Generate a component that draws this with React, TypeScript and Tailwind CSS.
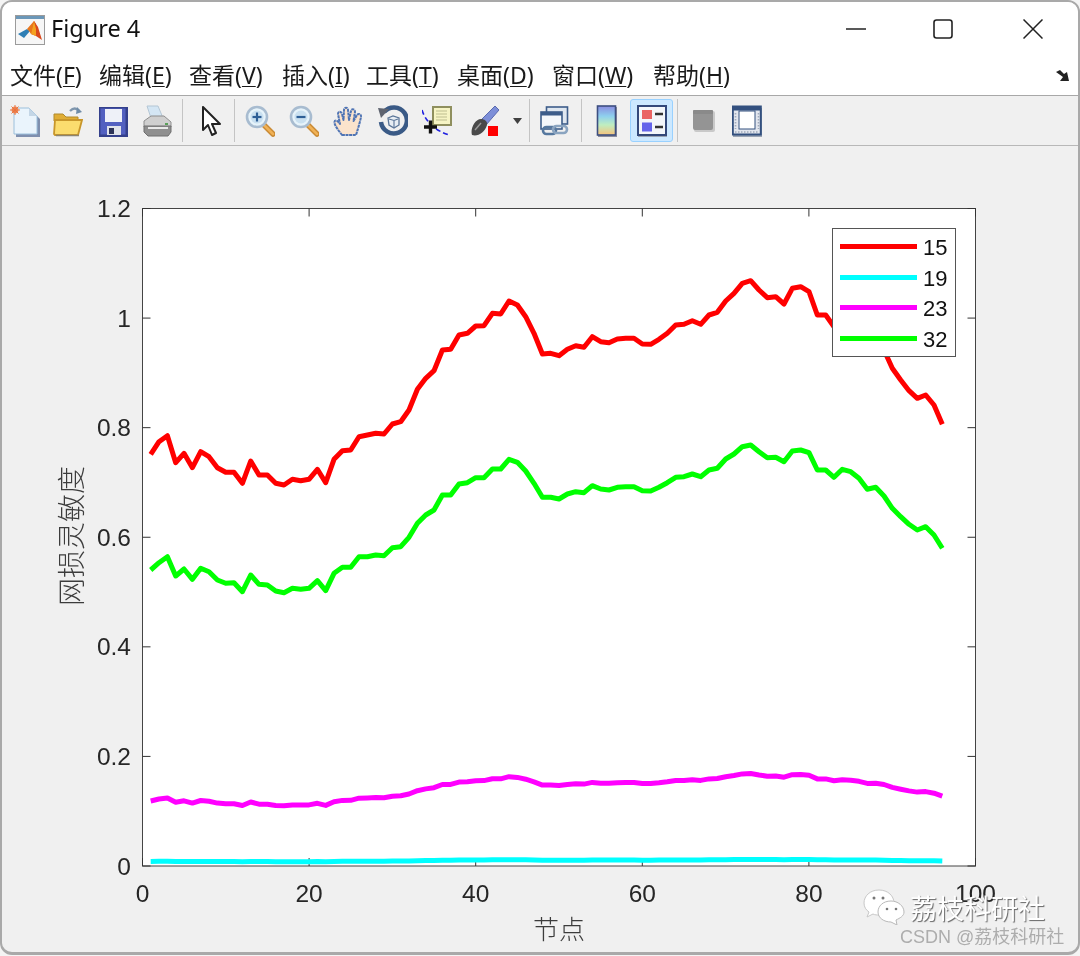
import React from "react";

// traced from the reference, i = 1..96. first 48 points are offset 280, the rest 270 (third-pixels)
const redA = [523,485,467,548,520,563,515,530,563,577,577,610,543,585,585,610,615,598,602,598,568,608,538,512,510,470,465,460,462,432,425,390,328,295,272,210,208,165,160,138,137,100,102,63,75,110,160,222];
const redB = [250,257,238,227,232,200,215,218,207,205,205,222,223,208,190,165,163,152,163,135,127,93,70,40,32,60,83,80,102,55,50,65,135,135,170,150,158,180,220,215,240,295,330,362,385,375,405,463];
const greenA = [870,848,830,888,867,898,865,875,900,910,908,935,885,913,915,933,938,925,928,925,902,932,880,862,862,830,830,825,827,803,800,772,730,705,690,645,645,612,608,593,593,567,567,538,547,573,610,652];
const greenB = [682,687,672,665,668,647,657,660,652,650,650,662,663,652,638,622,620,612,620,600,595,567,552,530,525,545,563,562,575,543,540,548,600,600,622,598,605,625,658,652,678,715,740,763,780,770,795,835];

const red = [...redA.map((z) => 280 + z / 3), ...redB.map((z) => 270 + z / 3)];
const green = [...greenA.map((z) => 280 + z / 3), ...greenB.map((z) => 270 + z / 3)];
const BASE = 866;
const magenta = red.map((y) => BASE - (BASE - y) * 0.158);
const cyan = red.map((y) => BASE - (BASE - y) * 0.0112);

const toPoints = (ys: number[]) =>
  ys.map((y, i) => `${(150.7 + i * 8.333).toFixed(1)},${y.toFixed(1)}`).join(" ");

const xTicks = [0, 20, 40, 60, 80, 100];
const yTicks = ["0", "0.2", "0.4", "0.6", "0.8", "1", "1.2"];
const LEFT = 142.5;
const RIGHT = 975.5;
const TOP = 208.5;
const BOTTOM = 866;

const sep = "w-px h-[43px] bg-[#c4c4c4] shrink-0";
const icon = "w-[30px] h-[32px] shrink-0 blur-[0.3px]";

function MatlabLogo() {
  return (
    <svg viewBox="0 0 30 30" className="w-[30px] h-[30px] ml-[13px] mt-[2px] shrink-0">
      <rect x="0.5" y="0.5" width="29" height="29" fill="#f6f6f6" stroke="#9b9b9b" />
      <rect x="1" y="1" width="28" height="3" fill="#6b97b8" />
      <path d="M3 19 L12 14 L15 16 L9 23Z" fill="#2f7fb5" />
      <path d="M12 14 L19 6 L21 9 L16 19 L14 16Z" fill="#e8761c" />
      <path d="M19 6 L23 12 L27 25 L21 21 L16 19Z" fill="#d9481c" />
      <path d="M19 6 L21 14 L21 21 L16 19Z" fill="#f4a11f" />
    </svg>
  );
}

function NewIcon() {
  return (
    <svg viewBox="0 0 30 32" className={`${icon} ml-[8px]`}>
      <path d="M6 5 H21 L30 14 V32 H6Z" fill="#7f8fae" />
      <path d="M4 3 H19 L27 11 V29 H4Z" fill="#eaf4fc" stroke="#9cc0dc" />
      <path d="M19 3 V11 H27Z" fill="#c4d6e6" />
      <circle cx="5" cy="5" r="3.4" fill="#f08a5a" />
      <path d="M5 0 V10 M0 5 H10 M1.5 1.5 L8.5 8.5 M8.5 1.5 L1.5 8.5" stroke="#e8733e" strokeWidth="1" />
    </svg>
  );
}

function OpenIcon() {
  return (
    <svg viewBox="0 0 30 32" className={`${icon} ml-[13px]`}>
      <path d="M17 6 Q22 1 26 6" fill="none" stroke="#8097ae" strokeWidth="2.4" />
      <path d="M24 2 L29 7 L23 9Z" fill="#6f8ca8" />
      <path d="M1 9 H10 L13 12 H25 V16 H1Z" fill="#e0ad35" stroke="#b08a2c" />
      <path d="M1 29 L2 15 H29 L25 30 H2Z" fill="#fbdc6e" stroke="#c8962a" strokeWidth="1.8" />
      <path d="M3 30.500 H26" stroke="#8c8470" strokeWidth="1.500" />
    </svg>
  );
}

function SaveIcon() {
  return (
    <svg viewBox="0 0 30 32" className={`${icon} ml-[15px]`}>
      <rect x="1" y="2" width="29" height="30" fill="#34408c" />
      <rect x="2.500" y="3.500" width="25" height="26" fill="#5260c0" />
      <rect x="7" y="4" width="17" height="13" fill="#eef1f8" />
      <rect x="9" y="21" width="14" height="9" fill="#dfe2ea" />
      <rect x="11" y="23" width="5" height="6" fill="#2c3358" />
    </svg>
  );
}

function PrintIcon() {
  return (
    <svg viewBox="0 0 30 32" className={`${icon} ml-[14px]`}>
      <path d="M5 1 H16 L21 13 H9Z" fill="#d4e6f4" stroke="#b4c6d4" />
      <path d="M2 16 L9 11 H22 L29 17 V22 H2Z" fill="#cfcfcf" stroke="#8e8e8e" />
      <path d="M2 21 H29 V27 L26 31 H6 L2 27Z" fill="#8f8f8f" stroke="#6f6f6f" />
      <rect x="6" y="22" width="20" height="2" fill="#e9e9e9" />
      <rect x="23" y="18" width="3" height="2" fill="#5aa05a" />
    </svg>
  );
}

function ArrowIcon() {
  return (
    <svg viewBox="0 0 30 32" className={`${icon} ml-[13px]`}>
      <path d="M7 2 V25 L12 20 L16 30 L20 28 L16 19 L24 19Z" fill="#fff" stroke="#222" strokeWidth="2" strokeLinejoin="round" />
    </svg>
  );
}

function ZoomIcon({ plus, className }: { plus?: boolean; className: string }) {
  return (
    <svg viewBox="0 0 30 32" className={`${icon} ${className}`}>
      <path d="M19 20 L28 29" stroke="#c98a34" strokeWidth="5.500" strokeLinecap="round" />
      <path d="M19 20 L28 29" stroke="#f0b156" strokeWidth="2.500" strokeLinecap="round" />
      <circle cx="12" cy="12" r="10" fill="#e6f3fa" stroke="#a8bcd0" strokeWidth="2.600" />
      <circle cx="12" cy="12" r="6.500" fill="#c9e0f0" />
      <path d="M7.500 12 H16.500" stroke="#2d5f96" strokeWidth="2.200" />
      {plus && <path d="M12 7.500 V16.500" stroke="#2d5f96" strokeWidth="2.200" />}
    </svg>
  );
}

function HandIcon() {
  return (
    <svg viewBox="0 0 30 32" className={`${icon} ml-[14px]`}>
      <path
        d="M9 30 C6 26 1 20 1.500 17 C2 14 5 16 7 19 L5 9 C5 6 8 6 9 9 L10.500 15 L11 5 C11 2 15 2 15 5 L16 15 L18 6 C18.500 3 22 4 22 7 L20.500 16 L24 10 C25.500 8 28.500 9 28 12 C27 17 25 24 23 30Z"
        fill="#fbe3cc"
        stroke="#4f74b4"
        strokeWidth="2"
        strokeLinejoin="round"
        strokeDasharray="3 0.6"
      />
    </svg>
  );
}

function RotateIcon() {
  return (
    <svg viewBox="0 0 30 32" className={`${icon} ml-[15px]`}>
      <path d="M6 7 A13 13 0 1 1 3 17" fill="none" stroke="#3a5a86" strokeWidth="4.500" />
      <path d="M0 3 L11 4 L3 13Z" fill="#5f6470" />
      <path d="M10 13 L15 11 L21 13 V20 L16 23 L11 20Z" fill="#e8eef4" stroke="#5a7598" strokeWidth="1.300" />
      <path d="M11 14 L16 15.500 L20 14 M16 15.500 V22" fill="none" stroke="#5a7598" strokeWidth="1.100" />
    </svg>
  );
}

function DatatipIcon() {
  return (
    <svg viewBox="0 0 30 32" className={`${icon} ml-[14px]`}>
      <path d="M0 5 C3 15 12 26 28 30" fill="none" stroke="#1f1fe0" strokeWidth="1.600" strokeDasharray="5 3" />
      <rect x="10" y="1" width="20" height="20" fill="#8f8f5e" />
      <rect x="12" y="3" width="16" height="16" fill="#f6f4c4" />
      <path d="M14 6 H25 M14 9 H25 M14 12 H25 M14 15 H25" stroke="#bdbd8f" strokeWidth="1.200" />
      <path d="M2 22 H15 M8.500 15.500 V28.500" stroke="#111" strokeWidth="3.400" />
    </svg>
  );
}

function BrushIcon() {
  return (
    <svg viewBox="0 0 30 32" className={`${icon} ml-[17px]`}>
      <path d="M12 15 L26 1 L30 5 L17 20Z" fill="#7d8fd8" stroke="#5a6ab0" />
      <path d="M3 30 C1 24 6 14 12 14 C16 14 19 17 18 20 C16 27 9 32 3 30Z" fill="#4a4a4a" />
      <path d="M6 25 L12 18" stroke="#9a9a9a" strokeWidth="1.400" />
      <rect x="19" y="21" width="10" height="10" fill="#ff0000" />
    </svg>
  );
}

function LinkIcon() {
  return (
    <svg viewBox="0 0 30 32" className={`${icon} ml-[10px]`}>
      <rect x="6.500" y="2" width="21" height="17" fill="#dfe7f0" stroke="#3d5d8a" strokeWidth="1.600" />
      <rect x="1" y="7" width="21" height="17" fill="#f4f7fa" stroke="#3d5d8a" strokeWidth="1.600" />
      <rect x="1" y="7" width="21" height="3.500" fill="#3d5d8a" />
      <rect x="3" y="22" width="13" height="7" rx="3.500" fill="none" stroke="#56789f" strokeWidth="2.600" />
      <rect x="13" y="21" width="14" height="7" rx="3.500" fill="none" stroke="#8aa4c0" strokeWidth="2.600" />
    </svg>
  );
}

function ColorbarIcon() {
  return (
    <svg viewBox="0 0 30 32" className={`${icon} ml-[10px]`}>
      <defs>
        <linearGradient id="cb" x1="0" y1="0" x2="0" y2="1">
          <stop offset="0" stopColor="#8a8ce0" />
          <stop offset="0.35" stopColor="#8ed0ee" />
          <stop offset="0.65" stopColor="#bfeec0" />
          <stop offset="1" stopColor="#f6c27c" />
        </linearGradient>
      </defs>
      <rect x="6" y="2" width="19" height="30" fill="#8d8d9c" />
      <rect x="5.500" y="1" width="18" height="29" fill="url(#cb)" stroke="#3d4f80" strokeWidth="1.600" />
    </svg>
  );
}

function LegendIcon() {
  return (
    <svg viewBox="0 0 30 32" className="w-[30px] h-[32px] blur-[0.3px]">
      <rect x="1" y="2" width="29" height="30" fill="#9aa4b4" />
      <rect x="1" y="1" width="28" height="29" fill="#f3f6fa" stroke="#33487a" strokeWidth="2" />
      <rect x="5" y="5" width="10" height="9" fill="#ea6464" />
      <rect x="5" y="17.500" width="10" height="9" fill="#6464ea" />
      <path d="M18 9 H26 M18 22 H26" stroke="#333" strokeWidth="2.400" />
    </svg>
  );
}

function GrayIcon() {
  return (
    <svg viewBox="0 0 30 32" className={`${icon} ml-[11px]`}>
      <rect x="5" y="6" width="21" height="21" rx="2" fill="#c9c9c9" />
      <rect x="4" y="5" width="20" height="20" rx="2" fill="#949494" />
      <rect x="4" y="5" width="20" height="4" rx="1" fill="#8a8a8a" />
    </svg>
  );
}

function FrameIcon() {
  return (
    <svg viewBox="0 0 30 32" className={`${icon} ml-[13px]`}>
      <rect x="1" y="3" width="29" height="29" fill="#9aa4b4" />
      <rect x="0.800" y="1.500" width="28" height="28" fill="#e2e6ee" stroke="#33507f" strokeWidth="2" />
      <rect x="1" y="2" width="28" height="3.500" fill="#33507f" />
      <rect x="7" y="6" width="16" height="18" fill="#fff" stroke="#33507f" />
      <path d="M3.500 8 V24 M26.500 8 V24 M3 27 H27" stroke="#9fa9ba" strokeWidth="1.600" strokeDasharray="1.500 1.500" />
    </svg>
  );
}

function Toolbar() {
  return (
    <div className="flex items-center h-[49px] bg-[#f0f0f0] border-t border-[#a8a8a8] box-content">
      <NewIcon />
      <OpenIcon />
      <SaveIcon />
      <PrintIcon />
      <div className={`${sep} ml-[10px]`} />
      <ArrowIcon />
      <div className={`${sep} ml-[8px]`} />
      <ZoomIcon plus className="ml-[10px]" />
      <ZoomIcon className="ml-[14px]" />
      <HandIcon />
      <RotateIcon />
      <DatatipIcon />
      <BrushIcon />
      <svg viewBox="0 0 9 6" className="w-[9px] h-[6px] ml-[14px] shrink-0">
        <path d="M0 0 H9 L4.500 6Z" fill="#404040" />
      </svg>
      <div className={`${sep} ml-[7px]`} />
      <LinkIcon />
      <div className={`${sep} ml-[11px]`} />
      <ColorbarIcon />
      <div className="w-[43px] h-[43px] ml-[8px] shrink-0 flex items-center justify-center bg-[#cce8ff] border border-[#99d1ff] rounded-[3px]">
        <LegendIcon />
      </div>
      <div className={`${sep} ml-[4px]`} />
      <GrayIcon />
      <FrameIcon />
    </div>
  );
}

const menus = [
  { name: "文件", key: "F", width: "w-[89px]" },
  { name: "编辑", key: "E", width: "w-[90px]" },
  { name: "查看", key: "V", width: "w-[93px]" },
  { name: "插入", key: "I", width: "w-[84px]" },
  { name: "工具", key: "T", width: "w-[91px]" },
  { name: "桌面", key: "D", width: "w-[95px]" },
  { name: "窗口", key: "W", width: "w-[101px]" },
  { name: "帮助", key: "H", width: "w-[80px]" },
];

function MenuBar() {
  return (
    <div className="flex items-center h-[40px] pl-[8px] pr-[8px] bg-white text-[23px] text-[#1a1a1a] font-['Noto_Sans','Noto_Sans_CJK_SC',sans-serif]">
      {menus.map((m) => (
        <span key={m.key} className={`${m.width} whitespace-nowrap`}>
          {m.name}(<span className="underline underline-offset-2 decoration-1">{m.key}</span>)
        </span>
      ))}
      <svg viewBox="0 0 14 12" className="w-[14px] h-[12px] ml-auto mt-[2px]">
        <path d="M0 2 L4 0 L8 4 L11 2 L13 11 L4 11 L7 7Z" fill="#222" />
      </svg>
    </div>
  );
}

function TitleBar() {
  return (
    <div className="flex items-center h-[53px] bg-white font-['Noto_Sans','Open_Sans',sans-serif] text-[23.5px] text-[#111]">
      <MatlabLogo />
      <span className="ml-[6px]">Figure 4</span>
      <div className="ml-auto flex items-center mr-[35px]">
        <svg viewBox="0 0 20 20" className="w-[20px] h-[20px]">
          <path d="M0 10 H20" stroke="#222" strokeWidth="1.500" />
        </svg>
        <svg viewBox="0 0 20 20" className="w-[20px] h-[20px] ml-[67px]">
          <rect x="1" y="1" width="18" height="18" rx="2.500" fill="none" stroke="#222" strokeWidth="1.600" />
        </svg>
        <svg viewBox="0 0 20 20" className="w-[20px] h-[20px] ml-[70px]">
          <path d="M0.500 0.500 L19.500 19.500 M19.500 0.500 L0.500 19.500" stroke="#222" strokeWidth="1.500" />
        </svg>
      </div>
    </div>
  );
}

function Chart() {
  const tickColor = "#333";
  return (
    <svg viewBox="2 146 1076 806" className="block w-[1076px] h-[806px]" fontFamily="'Liberation Sans', Arial, sans-serif">
      <rect x={LEFT} y={TOP} width={RIGHT - LEFT} height={BOTTOM - TOP} fill="#fff" stroke="#444" strokeWidth="1" />
      {xTicks.map((t) => {
        const x = LEFT + (t / 100) * (RIGHT - LEFT);
        return (
          <g key={t}>
            <path d={`M${x} ${BOTTOM} v-8 M${x} ${TOP} v8`} stroke={tickColor} strokeWidth="1" />
            <text x={x} y={893} fontSize="24.500" fill="#262626" textAnchor="middle" dominantBaseline="central">
              {t}
            </text>
          </g>
        );
      })}
      {yTicks.map((t) => {
        const y = BOTTOM - (Number(t) / 1.2) * (BOTTOM - TOP);
        return (
          <g key={t}>
            <path d={`M${LEFT} ${y} h8 M${RIGHT} ${y} h-8`} stroke={tickColor} strokeWidth="1" />
            <text x={131} y={y} fontSize="24.500" fill="#262626" textAnchor="end" dominantBaseline="central">
              {t}
            </text>
          </g>
        );
      })}
      <polyline points={toPoints(red)} fill="none" stroke="#ff0000" strokeWidth="5" strokeLinejoin="round" />
      <polyline points={toPoints(cyan)} fill="none" stroke="#00ffff" strokeWidth="5" />
      <polyline points={toPoints(magenta)} fill="none" stroke="#ff00ff" strokeWidth="5" strokeLinejoin="round" />
      <polyline points={toPoints(green)} fill="none" stroke="#00ff00" strokeWidth="5" strokeLinejoin="round" />
      <text
        x={559}
        y={927}
        fontSize="26"
        fill="#3c3c3c"
        textAnchor="middle"
        dominantBaseline="central"
        fontFamily="'Noto Sans CJK SC', sans-serif"
        fontWeight="300"
      >
        节点
      </text>
      <text
        transform="translate(70 536) rotate(-90)"
        fontSize="28"
        fill="#3c3c3c"
        textAnchor="middle"
        dominantBaseline="central"
        fontFamily="'Noto Sans CJK SC', sans-serif"
        fontWeight="300"
      >
        网损灵敏度
      </text>
    </svg>
  );
}

const legendRows = [
  { label: "15", line: "bg-[#ff0000]" },
  { label: "19", line: "bg-[#00ffff]" },
  { label: "23", line: "bg-[#ff00ff]" },
  { label: "32", line: "bg-[#00ff00]" },
];

function Legend() {
  return (
    <div className="absolute left-[830px] top-[82px] w-[124px] h-[129px] bg-white border border-[#555] flex flex-col justify-center gap-[7px] pl-[7px] font-['Liberation_Sans',sans-serif] text-[22px] leading-[20.500px] text-[#111]">
      {legendRows.map((r) => (
        <div key={r.label} className="flex items-center">
          <div className={`w-[77px] h-[5px] ${r.line}`} />
          <span className="ml-[6px] mt-[3px]">{r.label}</span>
        </div>
      ))}
    </div>
  );
}

function Watermark() {
  return (
    <>
      <svg viewBox="0 0 42 36" className="absolute left-[861px] top-[743px] w-[42px] h-[36px]">
        <path d="M16 1 C7 1 1 7 1 14 C1 18 3 21 6 23 L4 28 L10 25 C12 26 14 26 16 26 C26 26 31 20 31 14 C31 7 25 1 16 1Z" fill="#fff" stroke="#c8c8c8" />
        <path d="M28 12 C20 12 15 17 15 23 C15 29 21 33 28 33 L34 36 L33 31 C37 29 41 27 41 23 C41 17 35 12 28 12Z" fill="#fff" stroke="#b8b8b8" />
        <circle cx="11" cy="9" r="1.500" fill="#777" />
        <circle cx="20" cy="9" r="1.500" fill="#777" />
        <circle cx="24" cy="20" r="1.300" fill="#777" />
        <circle cx="33" cy="20" r="1.300" fill="#777" />
      </svg>
      <span className="absolute left-[908px] top-[744px] text-[27px] leading-[36px] text-white [text-shadow:1px_1px_1px_#666] font-['Noto_Sans_CJK_SC',sans-serif] whitespace-nowrap">
        荔枝科研社
      </span>
      <span className="absolute left-[898px] top-[779px] text-[18px] leading-[24px] text-[#adadad] font-['Liberation_Sans','Noto_Sans_CJK_SC',sans-serif] whitespace-nowrap">
        CSDN @荔枝科研社
      </span>
    </>
  );
}

export default function App() {
  return (
    <div className="w-[1080px] h-[956px] bg-[#f4f4f4] overflow-hidden">
      <div className="h-[955px] flex flex-col overflow-hidden rounded-[12px] border-2 border-b-[3px] border-[#a9a9a9] bg-[#f0f0f0] blur-[0.35px]">
        <TitleBar />
        <MenuBar />
        <Toolbar />
        <div className="relative flex-1 border-t border-[#b8b8b8]">
          <Chart />
          <Legend />
          <Watermark />
        </div>
      </div>
    </div>
  );
}
